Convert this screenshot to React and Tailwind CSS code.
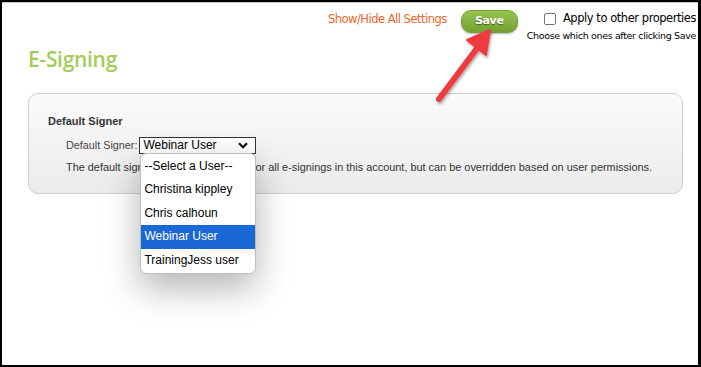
export default function App() {
  const users = ['--Select a User--', 'Christina kippley', 'Chris calhoun', 'Webinar User', 'TrainingJess user']

  return (
    <div className="w-[701px] h-[367px] bg-black pl-[2px] pt-[2px] pr-[3px] pb-[2px] overflow-hidden">
      <div className="relative w-full h-full bg-white border-t border-[#c8c8c8] overflow-hidden">
        {/* top bar */}
        <div className="flex justify-end items-start pr-[2px] pt-[7px] font-['DejaVu_Sans',sans-serif]">
          <a className="text-[11.5px] tracking-[-0.5px] text-[#f0642a] mt-[1px] mr-[14px]">Show/Hide All Settings</a>
          <button className="w-[57px] h-[23px] rounded-[10px] border border-[#76a035] bg-gradient-to-b from-[#98c44e] to-[#72a031] text-white text-[11px] font-bold tracking-[-0.3px] [text-shadow:0_1px_1px_rgba(0,0,0,0.45)] shadow-[0_1px_2px_rgba(0,0,0,0.3)] mr-[9px]">
            Save
          </button>
          <div className="flex flex-col items-end">
            <label className="flex items-center gap-[7px] text-[11.5px] tracking-[-0.45px] text-black">
              <span className="w-[12px] h-[12px] border border-[#767676] rounded-[2px] bg-white" />
              Apply to other properties
            </label>
            <div className="text-[9.5px] tracking-[-0.35px] text-black mt-[2px]">Choose which ones after clicking Save</div>
          </div>
        </div>

        {/* heading */}
        <h1 className="ml-[26px] mt-0 text-[21px] leading-[30px] font-semibold text-[#a2cd58] font-['Open_Sans',sans-serif] tracking-[-0.3px]">
          E-Signing
        </h1>

        {/* panel */}
        <div className="mx-[26px] mt-[19px] mr-[15px] h-[101px] rounded-[10px] border border-[#cfcfcf] bg-gradient-to-b from-[#fbfbfb] to-[#ebebeb] pl-[19px] pt-[21px] font-['Liberation_Sans',Arial,sans-serif]">
          <div className="text-[11px] font-bold text-[#333] leading-[13px]">Default Signer</div>
          <div className="flex items-center mt-[9px] ml-[18px]">
            <span className="text-[10.8px] text-[#444] mr-[2px]">Default Signer:</span>
            <div className="relative">
              <div className="w-[117px] h-[17px] border border-[#333] bg-white flex items-center justify-between pl-[3px] pr-[7px] text-[12px] text-black leading-none">
                Webinar User
                <svg width="10" height="7" viewBox="0 0 10 7">
                  <path d="M1 1.2 L5 5.2 L9 1.2" fill="none" stroke="#111" strokeWidth="2.2" />
                </svg>
              </div>
              <div className="absolute left-[1px] top-[16px] w-[116px] z-10 bg-white border border-[#bdbdbd] rounded-[6px] shadow-[0_14px_36px_rgba(0,0,0,0.3)] overflow-hidden py-[1px] text-[12px]">
                {users.map(u => (
                  <div
                    key={u}
                    className={
                      u === 'Webinar User'
                        ? 'h-[23.5px] leading-[23.5px] pl-[3px] bg-[#1a68d3] text-white'
                        : 'h-[23.5px] leading-[23.5px] pl-[3px] text-black'
                    }
                  >
                    {u}
                  </div>
                ))}
              </div>
            </div>
          </div>
          <div className="ml-[18px] mt-[5px] text-[10.9px] text-[#333]">
            The default signer will be pre-selected for all e-signings in this account, but can be overridden based on user permissions.
          </div>
        </div>

        {/* red arrow */}
        <svg className="absolute left-[420px] top-[16px]" width="90" height="95" viewBox="0 0 90 95">
          <defs>
            <filter id="sh" x="-30%" y="-30%" width="160%" height="160%">
              <feDropShadow dx="1" dy="2" stdDeviation="1.5" floodColor="#000" floodOpacity="0.35" />
            </filter>
          </defs>
          <g filter="url(#sh)">
            <line x1="17" y1="80" x2="59" y2="24" stroke="#ee3b3f" strokeWidth="6" strokeLinecap="round" />
            <path d="M68 11 L45 21 L64 36 Z" fill="#ee3b3f" stroke="#ee3b3f" strokeWidth="2" strokeLinejoin="round" />
          </g>
        </svg>
      </div>
    </div>
  )
}
